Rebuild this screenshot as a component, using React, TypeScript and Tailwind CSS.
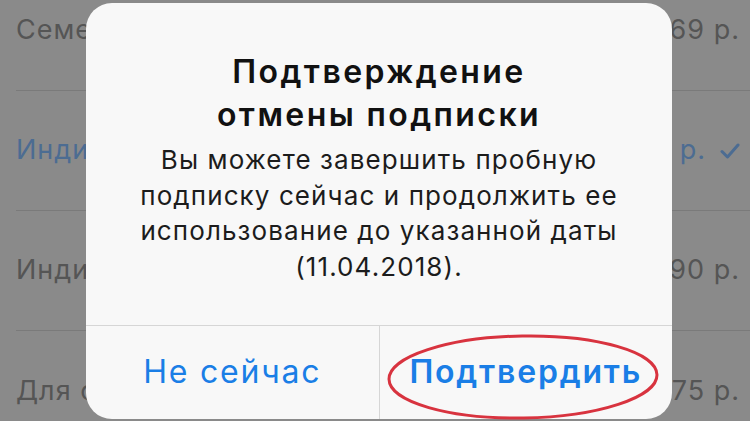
import React from "react";

const rows = [
  { label: "Семейная подписка", price: "269 р.", active: false },
  { label: "Индивидуальная", price: "169 р.", active: true },
  { label: "Индивидуальная (год)", price: "1690 р.", active: false },
  { label: "Для студентов", price: "75 р.", active: false },
];

export default function App() {
  return (
    <div
      className="relative w-[750px] h-[421px] overflow-hidden bg-[#8a8a8a]"
      style={{ fontFamily: "Inter, 'Noto Sans', sans-serif" }}
    >
      {/* dimmed list behind the alert */}
      <div className="flex flex-col -mt-[32px] border-t-[3px] border-[#9a9a9a]">
        {rows.map((r, i) => (
          <div key={i} className="h-[120px] pl-[16px] flex flex-col">
            <div className="flex-1 flex items-center justify-between pr-[10px] text-[27px] tracking-[1px]">
              <span className={r.active ? "text-[#4c6c92]" : "text-[#555555]"}>{r.label}</span>
              <span className={`flex items-center gap-[14px] ${r.active ? "text-[#4c6c92]" : "text-[#555555]"}`}>
                {r.price}
                {r.active && (
                  <svg width="20" height="16" viewBox="0 0 20 16" fill="none">
                    <path d="M2 8.5 L7.5 14 L18 2" stroke="#4c6c92" strokeWidth="3" strokeLinecap="round" strokeLinejoin="round" />
                  </svg>
                )}
              </span>
            </div>
            {i < rows.length - 1 && <div className="h-px bg-[#7a7a7a]" />}
          </div>
        ))}
      </div>

      {/* alert */}
      <div className="absolute left-[86px] top-[3px] w-[586px] h-[416px] rounded-[26px] bg-[#f8f8f8] flex flex-col">
        <div className="h-[322px] flex flex-col items-center pt-[47px] text-center">
          <h1 className="text-[32px] leading-[43px] font-semibold text-[#111111] tracking-[2.4px]">
            Подтверждение
            <br />
            отмены подписки
          </h1>
          <p className="mt-[6px] text-[26px] leading-[35.5px] text-[#1c1c1c] tracking-[1.1px]">
            Вы можете завершить пробную
            <br />
            подписку сейчас и продолжить ее
            <br />
            использование до указанной даты
            <br />
            (11.04.2018).
          </p>
        </div>
        <div className="flex-1 flex border-t border-[#d6d6d6]">
          <button className="flex-1 flex items-center justify-center text-[32px] text-[#1a7ee6] tracking-[1.8px] pb-[2px]">
            Не сейчас
          </button>
          <div className="w-px bg-[#d6d6d6]" />
          <button className="flex-1 flex items-center justify-center text-[32px] font-semibold text-[#1a7ee6] tracking-[1.8px] pb-[2px]">
            Подтвердить
          </button>
        </div>
      </div>

      {/* red marker ellipse */}
      <svg className="absolute left-0 top-0 pointer-events-none" width="750" height="421">
        <ellipse cx="523" cy="377" rx="134" ry="41" fill="none" stroke="#d8333f" strokeWidth="3" transform="rotate(-1 523 377)" />
      </svg>
    </div>
  );
}
